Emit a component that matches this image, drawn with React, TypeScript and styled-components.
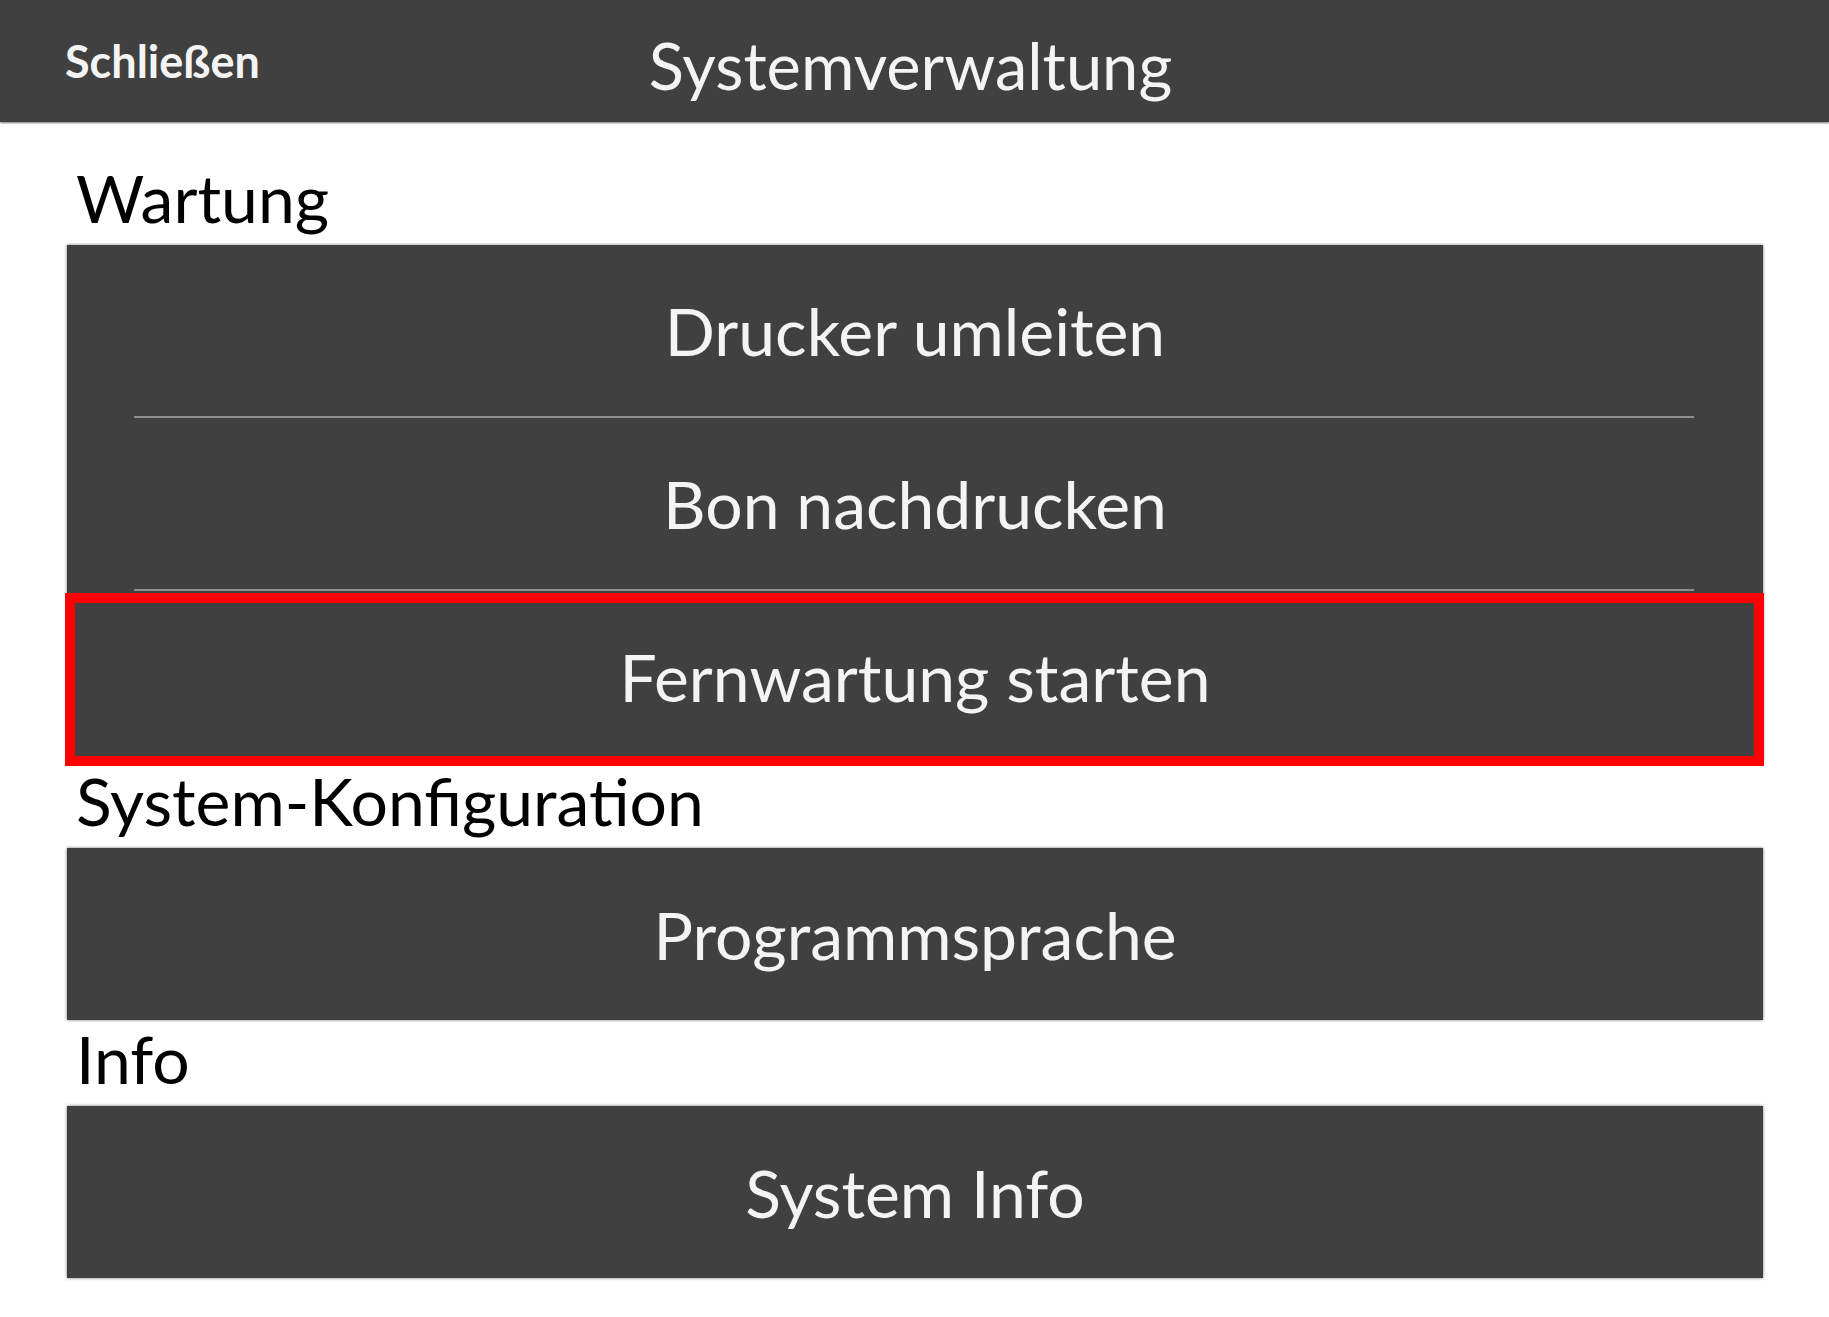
import React from "react";
import styled, { createGlobalStyle } from "styled-components";

const GlobalStyle = createGlobalStyle`
  html, body {
    margin: 0;
    padding: 0;
    background: #ffffff;
  }
  body {
    font-family: "Lato", "Open Sans", "Liberation Sans", sans-serif;
  }
  * { box-sizing: border-box; }
`;

const Page = styled.div`
  width: 1829px;
  min-height: 1317px;
  background: #ffffff;
  display: flex;
  flex-direction: column;
`;

const Header = styled.header`
  height: 122px;
  background: #404040;
  box-shadow: 0 1px 2px rgba(0, 0, 0, 0.55);
  display: grid;
  grid-template-columns: 1fr auto 1fr;
  align-items: center;
  position: relative;
  z-index: 1;
`;

const CloseButton = styled.button`
  justify-self: start;
  margin-left: 65px;
  padding: 0;
  border: none;
  background: transparent;
  color: #f4f4f4;
  font-family: "Lato", "Open Sans", sans-serif;
  font-weight: 700;
  font-size: 45px;
  cursor: pointer;
`;

const Title = styled.h1`
  margin: 0 8px 0 0;
  padding-top: 8px;
  color: #f4f4f4;
  font-family: "Lato", "Open Sans", sans-serif;
  font-weight: 400;
  font-size: 65px;
  line-height: 1.2;
`;

const Content = styled.main`
  padding: 37px 66px 0 67px;
  display: flex;
  flex-direction: column;
`;

const SectionLabel = styled.h2`
  margin: 0;
  padding: 0 0 9px 9px;
  height: 86px;
  line-height: 77px;
  font-family: "Lato", "Open Sans", sans-serif;
  font-weight: 400;
  font-size: 66px;
  color: #000000;
`;

const Group = styled.div`
  display: flex;
  flex-direction: column;
  background: #404040;
  box-shadow: 0 0 3px rgba(0, 0, 0, 0.55);
`;

const Row = styled.button<{ $height: number; $highlight?: boolean }>`
  position: relative;
  height: ${(p) => p.$height}px;
  width: 100%;
  display: flex;
  align-items: center;
  justify-content: center;
  border: none;
  background: #404040;
  color: #f4f4f4;
  font-family: "Lato", "Open Sans", sans-serif;
  font-weight: 400;
  font-size: 66px;
  padding: 0;
  cursor: pointer;
  ${(p) =>
    p.$highlight
      ? `z-index: 2;
         &::after {
           content: "";
           position: absolute;
           top: 2px;
           left: -2px;
           right: -1px;
           bottom: -4px;
           border: 10px solid #ff0000;
           pointer-events: none;
         }`
      : ``}
`;

const Divider = styled.div`
  height: 2px;
  margin: 0 69px 0 67px;
  background: #8e8e8e;
`;

type Item = { label: string; highlight?: boolean };
type Section = { title: string; items: Item[] };

const sections: Section[] = [
  {
    title: "Wartung",
    items: [
      { label: "Drucker umleiten" },
      { label: "Bon nachdrucken" },
      { label: "Fernwartung starten", highlight: true },
    ],
  },
  { title: "System-Konfiguration", items: [{ label: "Programmsprache" }] },
  { title: "Info", items: [{ label: "System Info" }] },
];

export default function App() {
  return (
    <>
      <GlobalStyle />
      <Page>
        <Header>
          <CloseButton>Schließen</CloseButton>
          <Title>Systemverwaltung</Title>
          <div />
        </Header>
        <Content>
          {sections.map((s) => (
            <React.Fragment key={s.title}>
              <SectionLabel>{s.title}</SectionLabel>
              <Group>
                {s.items.map((it, i) => (
                  <React.Fragment key={it.label}>
                    {i > 0 && <Divider />}
                    <Row
                      $height={s.items.length > 1 ? 171 : 172}
                      $highlight={it.highlight}
                    >
                      {it.label}
                    </Row>
                  </React.Fragment>
                ))}
              </Group>
            </React.Fragment>
          ))}
        </Content>
      </Page>
    </>
  );
}
